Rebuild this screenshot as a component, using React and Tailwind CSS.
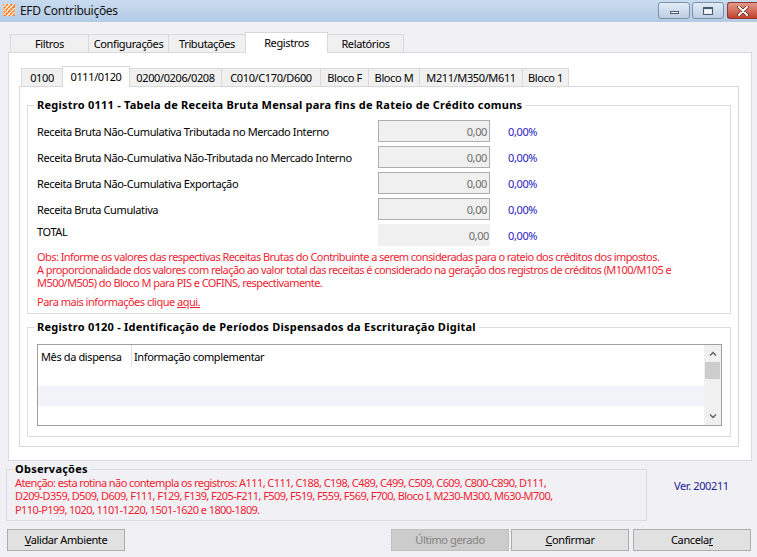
import React from "react";

function AppIcon() {
  return (
    <svg width="12" height="12" viewBox="0 0 12 12" className="ml-[3px] mt-[4px] shrink-0">
      <rect x="0" y="0" width="12" height="12" fill="#f5822a" />
      <path d="M0 3 L3 0 M0 7 L7 0 M0 11 L11 0 M4 12 L12 4 M8 12 L12 8" stroke="#ffffff" strokeWidth="1.1" />
      <path d="M1 0 L12 11 M5 0 L12 7 M0 4 L8 12 M0 8 L4 12" stroke="#ffd0a8" strokeWidth="0.8" />
    </svg>
  );
}

function OuterTab({ label, w, selected }) {
  if (selected) {
    return (
      <div
        className={`relative z-10 -ml-px -mb-px h-[21px] flex items-center justify-center border-t border-l border-r border-[#d9d9d9] bg-white pb-[1px] ${w}`}
      >
        {label}
      </div>
    );
  }
  return (
    <div
      className={`-ml-px first:ml-0 h-[18px] flex items-center justify-center border-t border-l border-r border-[#d9d9d9] bg-[#f0f0f0] ${w}`}
    >
      {label}
    </div>
  );
}

function Row({ label, total }) {
  return (
    <div className="flex items-center h-[22px]">
      <div className={`w-[341px] whitespace-nowrap ${total ? "mb-[8px]" : ""}`}>{label}</div>
      {total ? (
        <div className="w-[112px] h-[22px] bg-[#f0f0f0] flex items-center justify-end pr-[1px] text-[#6d6d6d]">0,00</div>
      ) : (
        <div className="w-[112px] h-[22px] bg-[#f0f0f0] border border-[#adadad] flex items-center justify-end pr-[2px] text-[#6d6d6d]">0,00</div>
      )}
      <div className="ml-[18px] text-[#2a1cc0]">0,00%</div>
    </div>
  );
}

function Btn({ children, className = "", disabled }) {
  return (
    <div
      className={`w-[118px] h-[22px] flex items-center justify-center border ${
        disabled ? "bg-[#cccccc] border-[#bfbfbf] text-[#838383]" : "bg-[#e1e1e1] border-[#adadad] text-black"
      } ${className}`}
    >
      {children}
    </div>
  );
}

export default function App() {
  return (
    <div className="w-[757px] h-[557px] overflow-hidden bg-[#f0f0f5] flex flex-col font-['Noto_Sans',sans-serif] text-[11px] leading-[13px] tracking-[-0.38px] text-black">
      {/* Title bar */}
      <div className="h-[22px] shrink-0 flex items-start bg-linear-to-b from-[#c8dbef] to-[#b5cbe5]">
        <AppIcon />
        <span className="ml-[5px] mt-[4px] text-[12px] leading-[14px] tracking-[-0.3px] text-[#111111] whitespace-nowrap">
          EFD Contribuições
        </span>
        <div className="ml-auto flex items-start pt-[2px]">
          <div className="w-[32px] h-[17px] rounded-[3px] border border-[#7d91ac] bg-linear-to-b from-[#e3ecf7] to-[#bccde3] flex justify-center">
            <div className="mt-[8px] w-[9px] h-[3px] bg-white border border-[#4a5a70]"></div>
          </div>
          <div className="ml-[2px] w-[32px] h-[17px] rounded-[3px] border border-[#7d91ac] bg-linear-to-b from-[#e3ecf7] to-[#bccde3] flex justify-center">
            <div className="mt-[4px] w-[10px] h-[8px] border border-[#4a5a70] border-t-2 bg-[#dfe8f3] flex items-center justify-center">
              <div className="w-[6px] h-[3px] border border-white"></div>
            </div>
          </div>
          <div className="ml-[3px] w-[30px] h-[17px] rounded-l-[3px] border border-r-0 border-[#8b3a30] bg-linear-to-b from-[#e2998a] to-[#c1402b] flex justify-center items-center">
            <svg width="12" height="10" viewBox="0 0 12 10">
              <path d="M2 1 L10 9 M10 1 L2 9" stroke="#5a2018" strokeWidth="3.4" strokeLinecap="round" />
              <path d="M2 1 L10 9 M10 1 L2 9" stroke="#ffffff" strokeWidth="2" strokeLinecap="round" />
            </svg>
          </div>
        </div>
      </div>

      {/* Outer tabs */}
      <div className="mt-[10px] ml-[10px] h-[20px] flex items-end shrink-0">
        <OuterTab label="Filtros" w="w-[79px]" />
        <OuterTab label="Configurações" w="w-[81px]" />
        <OuterTab label="Tributações" w="w-[78px]" />
        <OuterTab label="Registros" w="w-[83px]" selected />
        <OuterTab label="Relatórios" w="w-[77px]" />
      </div>

      {/* Outer panel */}
      <div className="ml-[8px] w-[744px] h-[409px] shrink-0 border border-[#d9d9d9] bg-white pt-[13px] pl-[10px]">
        {/* Inner tabs */}
        <div className="ml-[2px] h-[20px] flex items-end">
          <OuterTab label="0100" w="w-[42px]" />
          <OuterTab label="0111/0120" w="w-[68px]" selected />
          <OuterTab label="0200/0206/0208" w="w-[93px]" />
          <OuterTab label="C010/C170/D600" w="w-[100px]" />
          <OuterTab label="Bloco F" w="w-[49px]" />
          <OuterTab label="Bloco M" w="w-[52px]" />
          <OuterTab label="M211/M350/M611" w="w-[104px]" />
          <OuterTab label="Bloco 1" w="w-[47px]" />
        </div>

        {/* Inner panel */}
        <div className="w-[720px] h-[361px] border border-[#d9d9d9] bg-white px-[7px] pt-[11px]">
          {/* Group 0111 */}
          <fieldset className="border border-[#dcdcdc] pl-[9px] pb-[5px]">
            <legend className="-ml-[3px] px-[3px] font-bold tracking-[0.24px] leading-[14px] whitespace-nowrap">
              Registro 0111 - Tabela de Receita Bruta Mensal para fins de Rateio de Crédito comuns
            </legend>
            <div className="pt-[8px] flex flex-col gap-[4px]">
              <Row label="Receita Bruta Não-Cumulativa Tributada no Mercado Interno" />
              <Row label="Receita Bruta Não-Cumulativa Não-Tributada no Mercado Interno" />
              <Row label="Receita Bruta Não-Cumulativa Exportação" />
              <Row label="Receita Bruta Cumulativa" />
              <Row label="TOTAL" total />
            </div>
            <div className="mt-[4px] text-[#f01e32] whitespace-nowrap leading-[13px] tracking-[-0.56px]">
              Obs: Informe os valores das respectivas Receitas Brutas do Contribuinte a serem consideradas para o rateio dos créditos dos impostos.
              <br />
              A proporcionalidade dos valores com relação ao valor total das receitas é considerado na geração dos registros de créditos (M100/M105 e
              <br />
              M500/M505) do Bloco M para PIS e COFINS, respectivamente.
            </div>
            <div className="mt-[6px] text-[#f01e32] whitespace-nowrap leading-[13px] tracking-[-0.5px]">
              Para mais informações clique <span className="underline">aqui.</span>
            </div>
          </fieldset>

          {/* Group 0120 */}
          <fieldset className="mt-[6px] border border-[#dcdcdc] pl-[9px] pb-[10px]">
            <legend className="-ml-[3px] px-[3px] font-bold tracking-[0.24px] leading-[14px] whitespace-nowrap">
              Registro 0120 - Identificação de Períodos Dispensados da Escrituração Digital
            </legend>
            <div className="mt-[10px] w-[685px] h-[82px] border border-[#a0a0a0] flex">
              <div className="flex-1 flex flex-col">
                <div className="h-[22px] flex items-stretch">
                  <div className="w-[94px] pl-[3px] flex items-center border-r border-[#e3e3e3]">Mês da dispensa</div>
                  <div className="pl-[2px] flex items-center">Informação complementar</div>
                </div>
                <div className="h-[19px]"></div>
                <div className="h-[20px] bg-[#f2f3f8]"></div>
                <div className="flex-1"></div>
              </div>
              <div className="w-[17px] bg-[#f0f0f0] flex flex-col items-center">
                <div className="h-[17px] w-full flex items-center justify-center">
                  <svg width="8" height="5" viewBox="0 0 8 5">
                    <path d="M1 4.5 L4 1.5 L7 4.5" stroke="#606060" strokeWidth="1.4" fill="none" />
                  </svg>
                </div>
                <div className="w-[15px] h-[17px] bg-[#cdcdcd]"></div>
                <div className="flex-1"></div>
                <div className="h-[17px] w-full flex items-center justify-center">
                  <svg width="8" height="5" viewBox="0 0 8 5">
                    <path d="M1 0.5 L4 3.5 L7 0.5" stroke="#606060" strokeWidth="1.4" fill="none" />
                  </svg>
                </div>
              </div>
            </div>
          </fieldset>
        </div>
      </div>

      {/* Observações */}
      <div className="flex items-start shrink-0 mt-[1px]">
        <fieldset className="ml-[6px] w-[641px] border border-[#dcdcdc] pl-[8px] pb-[4px]">
          <legend className="-ml-[2px] px-[2px] font-bold tracking-[0.24px] leading-[14px] whitespace-nowrap">Observações</legend>
          <div className="text-[#f01e32] whitespace-nowrap leading-[13.3px] tracking-[-0.58px]">
            Atenção: esta rotina não contempla os registros: A111, C111, C188, C198, C489, C499, C509, C609, C800-C890, D111,
            <br />
            D209-D359, D509, D609, F111, F129, F139, F205-F211, F509, F519, F559, F569, F700, Bloco I, M230-M300, M630-M700,
            <br />
            P110-P199, 1020, 1101-1220, 1501-1620 e 1800-1809.
          </div>
        </fieldset>
        <div className="ml-[27px] mt-[17px] text-[#1c1c96] whitespace-nowrap">Ver. 200211</div>
      </div>

      {/* Buttons */}
      <div className="mt-[8px] flex shrink-0">
        <Btn className="ml-[7px]">
          <span><span className="underline">V</span>alidar Ambiente</span>
        </Btn>
        <Btn className="ml-[266px]" disabled>
          <span>Último <span className="underline">g</span>erado</span>
        </Btn>
        <Btn className="ml-[2px]">
          <span><span className="underline">C</span>onfirmar</span>
        </Btn>
        <Btn className="ml-[4px]">
          <span>Cancela<span className="underline">r</span></span>
        </Btn>
      </div>
    </div>
  );
}
